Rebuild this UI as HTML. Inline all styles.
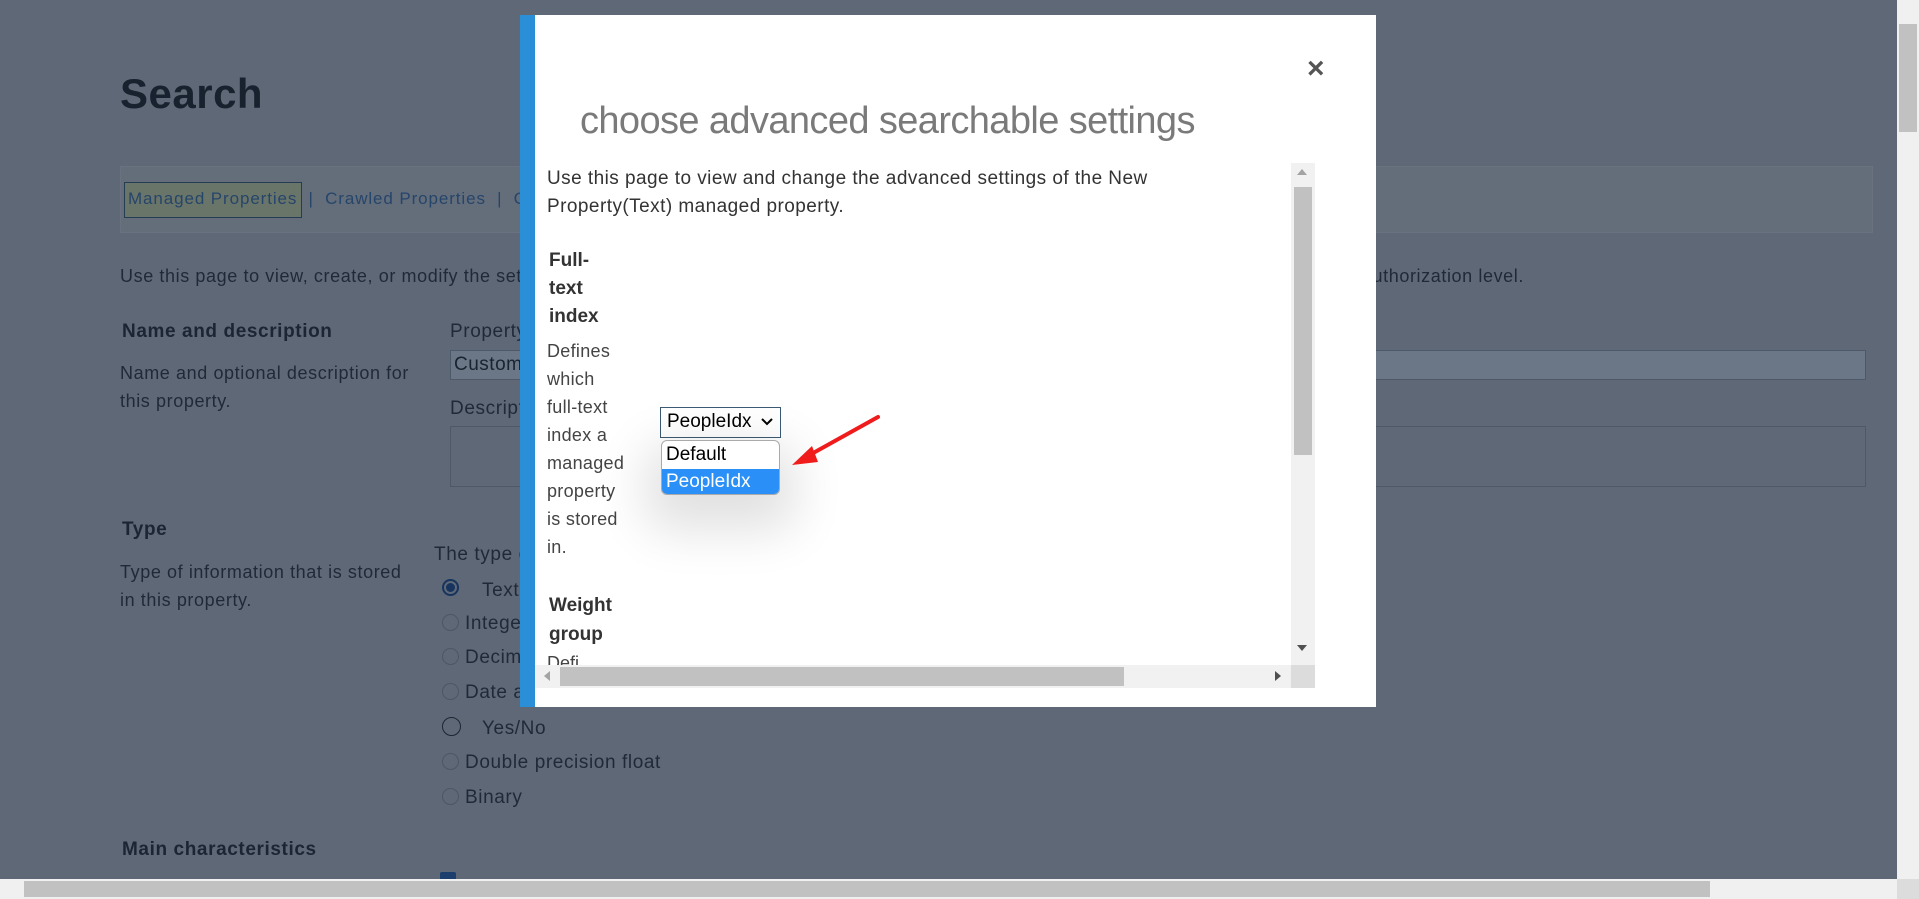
<!DOCTYPE html>
<html><head><meta charset="utf-8"><style>
*{margin:0;padding:0;box-sizing:border-box}
body{width:1919px;height:899px;overflow:hidden;position:relative;background:#5f6876;font-family:"Liberation Sans",sans-serif;color:#1e2836}
.a{position:absolute;white-space:nowrap}
.t{font-size:18px;color:#1f2937;letter-spacing:.6px}
.h{font-size:19px;font-weight:bold;color:#1b2533;letter-spacing:.6px}
.rad{position:absolute;width:17px;height:17px;border-radius:50%;border:1px solid #4d5663}
</style></head><body>
<div class="a" style="left:120px;top:70px;font-size:42px;font-weight:bold;color:#18222f;letter-spacing:.5px">Search</div>
<div class="a" style="left:120px;top:166px;width:1753px;height:67px;background:#646d7a;border:1px solid #69727e"></div>
<div class="a" style="left:124px;top:182px;width:178px;height:36px;border:1px solid #263c55;background:#6a7569"></div>
<div class="a" style="left:128px;top:189px;font-size:17px;color:#26456b;letter-spacing:.9px">Managed Properties &nbsp;|&nbsp; Crawled Properties &nbsp;|&nbsp; C</div>
<div class="a t" style="left:120px;top:266px">Use this page to view, create, or modify the settings of a managed property</div>
<div class="a t" style="right:395px;top:266px">and authorization level.</div>
<div class="a h" style="left:122px;top:321px">Name and description</div>
<div class="a t" style="left:120px;top:359px;line-height:28px">Name and optional description for<br>this property.</div>
<div class="a t" style="left:450px;top:321px;font-size:19px">Property name</div>
<div class="a" style="left:450px;top:350px;width:1416px;height:30px;background:#6b7686;border:1px solid #4d5868"></div>
<div class="a" style="left:454px;top:354px;font-size:19px;color:#1a2430;letter-spacing:.5px">Custom property</div>
<div class="a t" style="left:450px;top:398px;font-size:19px">Description</div>
<div class="a" style="left:450px;top:426px;width:1416px;height:61px;border:1px solid #4d5868"></div>
<div class="a h" style="left:122px;top:519px">Type</div>
<div class="a t" style="left:120px;top:558px;line-height:28px">Type of information that is stored<br>in this property.</div>
<div class="a t" style="left:434px;top:544px;font-size:19px">The type of information</div>
<div class="rad" style="left:442px;top:579px;border:2px solid #16345e"><div style="margin:2px;width:9px;height:9px;border-radius:50%;background:#16345e"></div></div>
<div class="a t" style="left:482px;top:580px;font-size:19px">Text</div>
<div class="rad" style="left:442px;top:614px"></div><div class="a t" style="left:465px;top:613px;font-size:19px">Integer</div>
<div class="rad" style="left:442px;top:648px"></div><div class="a t" style="left:465px;top:647px;font-size:19px">Decimal</div>
<div class="rad" style="left:442px;top:683px"></div><div class="a t" style="left:465px;top:682px;font-size:19px">Date and Time</div>
<div class="rad" style="left:442px;top:717px;width:19px;height:19px;border:1.5px solid #1c2531"></div><div class="a t" style="left:482px;top:718px;font-size:19px">Yes/No</div>
<div class="rad" style="left:442px;top:753px"></div><div class="a t" style="left:465px;top:752px;font-size:19px">Double precision float</div>
<div class="rad" style="left:442px;top:788px"></div><div class="a t" style="left:465px;top:787px;font-size:19px">Binary</div>
<div class="a h" style="left:122px;top:839px">Main characteristics</div>
<div class="a" style="left:440px;top:872px;width:16px;height:10px;background:#1d3f6e;border-radius:2px"></div>

<div class="a" style="left:1897px;top:0;width:22px;height:879px;background:#f0f0f0"></div>
<div class="a" style="left:1899px;top:24px;width:18px;height:108px;background:#c1c1c1"></div>
<div class="a" style="left:0;top:879px;width:1897px;height:20px;background:#f0f0f0"></div>
<div class="a" style="left:24px;top:881px;width:1686px;height:16px;background:#c1c1c1"></div>
<div class="a" style="left:1897px;top:879px;width:22px;height:20px;background:#dcdcdc"></div>

<div class="a" style="left:520px;top:15px;width:856px;height:692px;background:#fff;border-left:15px solid #2b8fd8"></div>
<div class="a" style="left:1307px;top:52px;font-size:30px;color:#555;font-weight:bold">×</div>
<div class="a" style="left:580px;top:100px;font-size:38px;color:#7a7a7a;letter-spacing:-.6px">choose advanced searchable settings</div>
<div class="a" style="left:535px;top:163px;width:780px;height:525px;overflow:hidden">
  <div class="a" style="left:12px;top:2px;font-size:19px;line-height:28px;color:#333;letter-spacing:.45px">Use this page to view and change the advanced settings of the New<br>Property(Text) managed property.</div>
  <div class="a" style="left:14px;top:84px;font-size:19px;font-weight:bold;line-height:28px;color:#333">Full-<br>text<br>index</div>
  <div class="a" style="left:12px;top:174px;font-size:18px;line-height:28px;color:#444;letter-spacing:.3px">Defines<br>which<br>full-text<br>index a<br>managed<br>property<br>is stored<br>in.</div>
  <div class="a" style="left:14px;top:428px;font-size:19px;font-weight:bold;line-height:29px;color:#333">Weight<br>group</div>
  <div class="a" style="left:12px;top:490px;font-size:18px;color:#444">Defi</div>
  <div class="a" style="left:756px;top:0;width:24px;height:502px;background:#f1f1f1"></div>
  <div class="a" style="left:759px;top:24px;width:18px;height:268px;background:#c1c1c1"></div>
  <div class="a" style="left:762px;top:6px;width:0;height:0;border:5px solid transparent;border-bottom:6px solid #a3a3a3;border-top:0"></div>
  <div class="a" style="left:762px;top:482px;width:0;height:0;border:5px solid transparent;border-top:6px solid #505050;border-bottom:0"></div>
  <div class="a" style="left:0;top:502px;width:780px;height:23px;background:#f1f1f1"></div>
  <div class="a" style="left:25px;top:504px;width:564px;height:19px;background:#c1c1c1"></div>
  <div class="a" style="left:9px;top:508px;border:5px solid transparent;border-right:6px solid #a3a3a3;border-left:0"></div>
  <div class="a" style="left:740px;top:508px;border:5px solid transparent;border-left:6px solid #505050;border-right:0"></div>
  <div class="a" style="left:756px;top:502px;width:24px;height:23px;background:#dcdcdc"></div>
</div>
<div class="a" style="left:660px;top:407px;width:121px;height:31px;border:1px solid #3b5a73;background:#fff"></div>
<div class="a" style="left:667px;top:411px;font-size:19px;color:#000">PeopleIdx</div>
<svg class="a" style="left:761px;top:417px" width="12" height="10"><path d="M1 2 L6 7 L11 2" stroke="#000" stroke-width="2" fill="none"/></svg>
<div class="a" style="left:661px;top:440px;width:119px;height:55px;border:1px solid #aaa;border-radius:6px;background:#fff;overflow:hidden;box-shadow:0 20px 50px 15px rgba(0,0,0,.12)">
  <div style="height:28px;padding:3px 0 0 4px;font-size:19px;color:#000">Default</div>
  <div style="height:27px;padding:2px 0 0 4px;font-size:19px;color:#fff;background:#2a8ff7">PeopleIdx</div>
</div>
<svg class="a" style="left:780px;top:405px" width="110" height="70"><line x1="98" y1="12" x2="26" y2="52" stroke="#f01c1c" stroke-width="4" stroke-linecap="round"/><path d="M12 60 L32 41 L38 57 Z" fill="#f01c1c"/></svg>
</body></html>
